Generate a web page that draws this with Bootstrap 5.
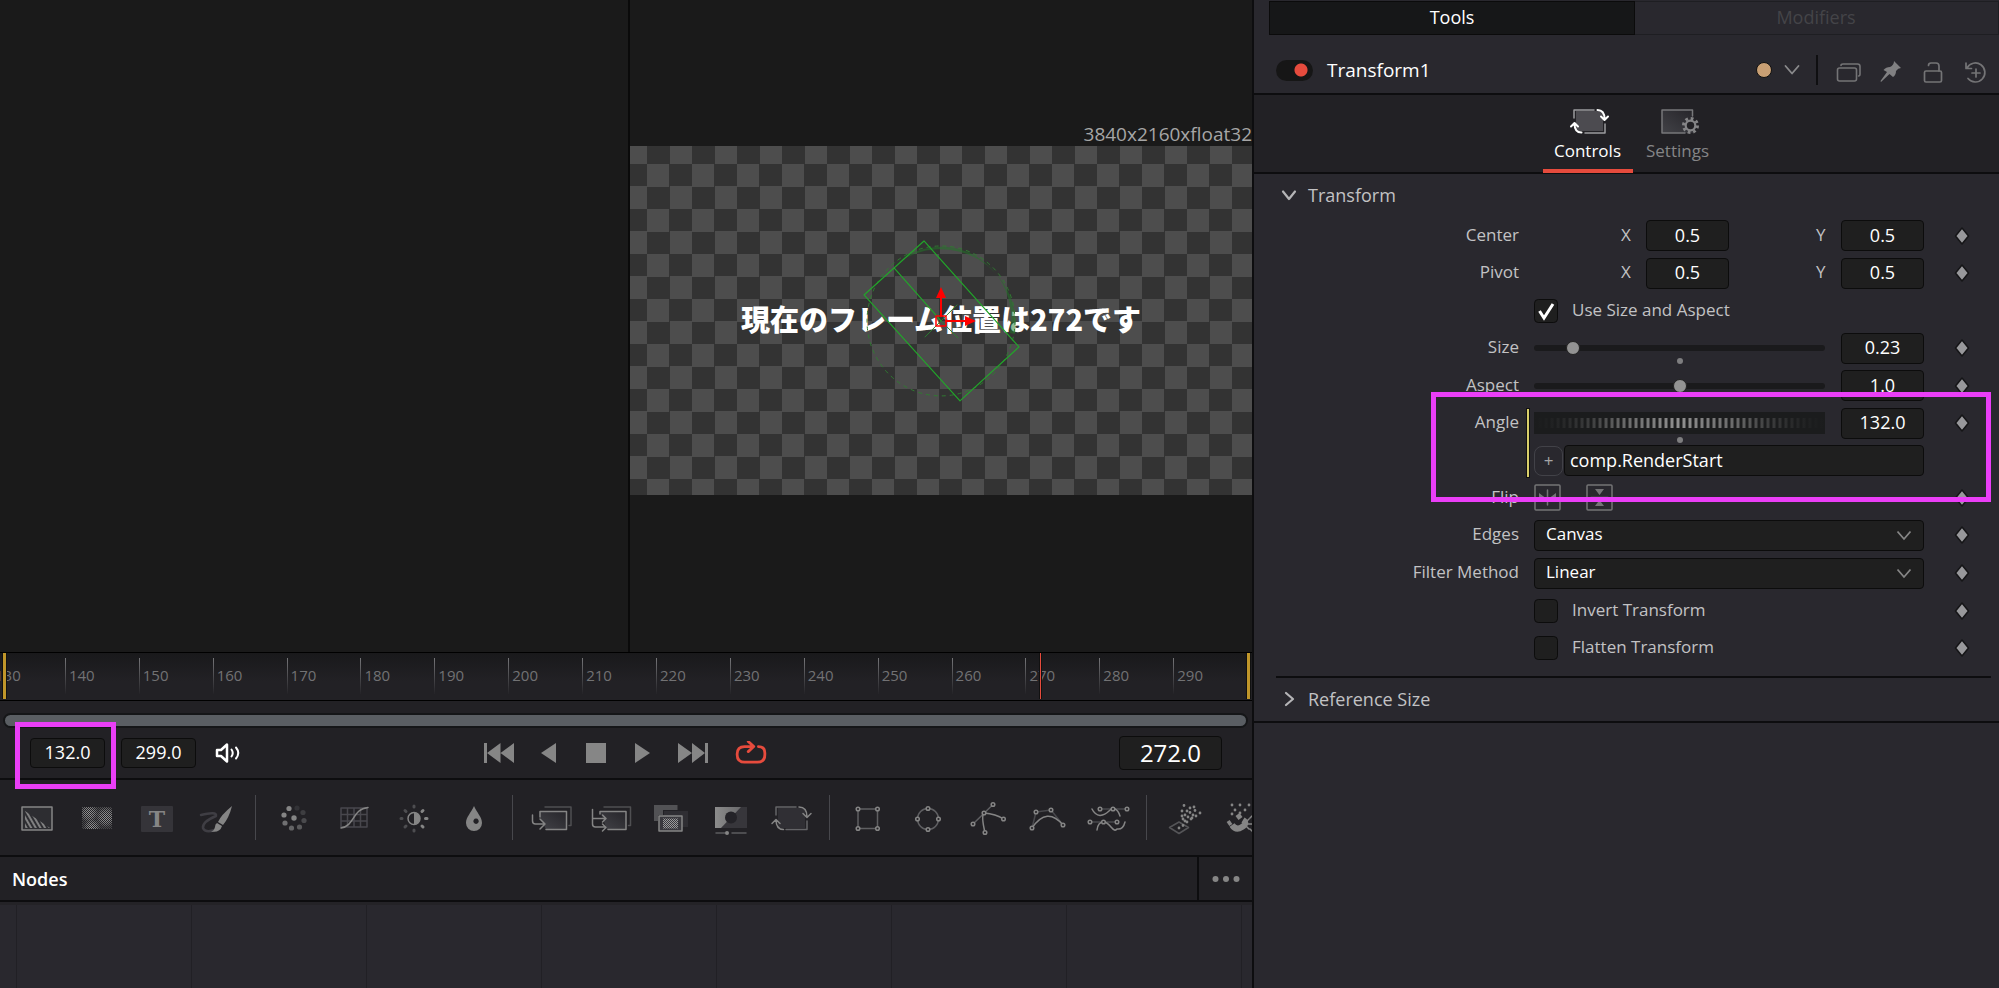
<!DOCTYPE html>
<html lang="en">
<head>
<meta charset="utf-8">
<meta name="viewport" content="width=device-width, initial-scale=1">
<title>Fusion – Transform1</title>
<link href="https://cdn.jsdelivr.net/npm/bootstrap@5.3.0/dist/css/bootstrap.min.css" rel="stylesheet">
<style>
  :root { --line:#0d0d0f; --panel:#29282e; --bar:#222125; --field:#1f1f1f; --label:#c2c2c4; --hot:#e64b3d; --note:#ea3ef7; }
  body { background:var(--panel); color:#fff; font-family:"Open Sans","Noto Sans CJK JP",sans-serif; font-size:17px; line-height:24px; overflow-x:hidden; }
  button { background:none; border:0; padding:0; color:inherit; }
  svg { display:block; fill:none; stroke-linecap:round; stroke-linejoin:round; }
  .solid { fill:#868686; }
  .workspace { display:grid; grid-template-columns:minmax(0,1254fr) minmax(0,745fr); min-height:100vh; }
  .stage { background:var(--bar); border-right:2px solid var(--line); overflow:hidden; }

  /* viewers */
  .viewers { background:#1a1a1a; display:grid; grid-template-columns:minmax(0,628fr) minmax(0,624fr); }
  .viewer-b { border-left:2px solid #0a0a0a; padding-bottom:11px; }
  .frame { aspect-ratio:16/9; width:100%; background:conic-gradient(#333 25%,#4d4d4d 0 50%,#333 0 75%,#4d4d4d 0) 17px 18px/45px 45px; }
  .frame-info { right:0; bottom:100%; color:#a6a6a6; font-size:19px; white-space:nowrap; }
  .frame-title { font:900 29px/32px "Noto Sans CJK JP",sans-serif; white-space:nowrap; padding-bottom:6px; }
  .gizmo { inset:0; width:100%; height:100%; }

  /* timeline */
  .ruler { height:49px; border-top:1px solid #000; border-bottom:1px solid #000; background:linear-gradient(#19191b,#222125 60%); overflow:hidden; }
  .ticks { margin-left:-9px; padding-top:5px; }
  .tick { flex:0 0 5.86%; height:36px; padding-left:3px; color:#727274; font-size:15px; line-height:35px; border-left:1px solid; border-image:linear-gradient(#77777a,#222125) 1; }
  .edge { top:0; width:5px; height:46px; background:#c0962a; border:solid #111; border-width:0 1px; }
  .edge-in { left:2px; } .edge-out { right:1px; }
  .playhead { top:0; left:83%; width:3px; height:46px; background:var(--hot); border:solid #111; border-width:0 1px; }
  .scroller { margin:12px 4px 0 3px; height:15px; background:#5a5e63; border:2px solid #151618; border-radius:8px; }
  .transport { height:52px; border-bottom:2px solid var(--line); padding:0 30px; }
  .transport svg { height:24px; }
  .field { background-color:var(--field); border:1px solid #0c0c0c; border-radius:4px; color:#fff; height:30px; padding:0 0 2px; text-align:center; font-size:18px; box-shadow:none; min-height:0; line-height:24px; }
  .field:focus { background-color:var(--field); color:#fff; border-color:#555; box-shadow:none; }
  .time { width:75px; }
  .time-now { width:103px; height:34px; font-size:24px; }
  .mark-box { border:5px solid var(--note); pointer-events:none; }
  .mark-time { left:15px; top:-6px; width:101px; height:67px; }
  .play-set { gap:26px; left:484px; }

  /* tools */
  .tools { height:77px; border-bottom:2px solid var(--line); padding-left:7px; overflow:hidden; }
  .tools button, .tools svg { flex:none; width:60px; height:44px; }
  .tools svg { stroke:#858585; stroke-width:1.5; }
  .split { flex:none; width:1px; height:45px; margin:0 8px; background:#47474c; }
  .nodes-bar { height:45px; border-bottom:2px solid var(--line); }
  .nodes-bar h2 { font-size:18px; line-height:24px; font-weight:600; padding-left:12px; }
  .more { width:55px; border-left:2px solid var(--line); }
  .node-grid { height:86px; background:repeating-linear-gradient(90deg,transparent 0 174px,#212025 0 175px) -158px 0/calc(100% + 158px) 100%,var(--panel); border-top:3px solid #242327; }

  /* inspector */
  .inspector { background:var(--panel); }
  .mode-tabs { margin:1px 0 0 15px; height:34px; border:1px solid #1e1e22; font-size:18px; }
  .mode-tabs button { flex:1; color:#444448; padding-bottom:2px; }
  .mode-tabs button.active { background:#161718; color:#fff; outline:1px solid #0b0b0b; }
  .tool-head { height:60px; padding:0 11px 8px 22px; border-bottom:2px solid var(--line); font-size:19px; }
  .tool-name { margin-left:14px; }
  .power { width:37px; height:21px; margin:0; border:0; border-radius:11px; background:#161616 radial-gradient(circle at 25px 10px,var(--hot) 6px,transparent 7px); appearance:none; }
  .swatch { width:16px; height:16px; border-radius:50%; background:#c9a074; border:1px solid #111; }
  .head-line { width:2px; height:30px; margin:0 14px 0 16px; background:#0f0f11; }
  .pages { height:79px; border-bottom:2px solid var(--line); background:var(--bar); padding-left:12px; }
  .pages button { width:90px; height:78px; color:#858587; border-bottom:4px solid transparent; padding-top:4px; }
  .pages button.active { color:#fff; border-color:var(--hot); }
  .pages svg { margin-bottom:2px; }
  .section-head { height:43px; padding:0 0 2px 27px; gap:11px; color:var(--label); font-size:18px; }
  .param { display:grid; grid-template-columns:265px minmax(0,1fr) 75px; column-gap:0; height:37px; align-items:center; color:var(--label); }
  .param.tall { height:38px; }
  .param > :first-child { text-align:right; padding-bottom:2px; }
  .param > :nth-child(2) { padding-left:15px; }
  .param .key { justify-self:center; }
  .num { width:83px; height:31px; }
  .axis { width:21px; padding-bottom:2px; }
  .tick-label { padding:0 0 2px 14px; }
  .tick-box { width:24px; height:24px; margin:0; background-color:var(--field); border:1px solid #0c0c0c; border-radius:4px; }
  .tick-box:checked { background-color:var(--field); border-color:#0c0c0c; }
  .tick-box:checked[type=checkbox] { background-image:url("data:image/svg+xml,%3Csvg xmlns='http://www.w3.org/2000/svg' viewBox='0 0 22 22'%3E%3Cpath d='M4.500 11l4.500 7L18 4' fill='none' stroke='%23fff' stroke-width='3'/%3E%3C/svg%3E"); }
  .slide { appearance:none; background:none; width:100%; height:14px; margin:0; display:block; }
  .slide::-webkit-slider-runnable-track { height:6px; border-radius:3px; background:#1a1a1c; border:0; }
  .slide::-webkit-slider-thumb { appearance:none; width:14px; height:14px; margin-top:-4px; border-radius:50%; background:#939393; border:1px solid #222; }
  .home { left:calc(50% - 3px); margin-top:3px; width:6px; height:6px; border-radius:50%; background:#7e7e80; }
  .wheel { appearance:none; display:block; width:100%; height:22px; margin:0; background:linear-gradient(90deg,#1b1c1d,transparent 60%) 0 0/50% 100% no-repeat,linear-gradient(270deg,#1b1c1d,transparent 60%) 100% 0/50% 100% no-repeat,linear-gradient(90deg,#1b1c1de0,#1b1c1d00 50%,#1b1c1de0),linear-gradient(90deg,#909090 50%,#1b1c1d 0) center/6px 10px repeat-x,#1b1c1d; }
  .wheel::-webkit-slider-thumb { appearance:none; width:14px; height:22px; }
  .expr-line { left:273px; top:5px; bottom:2px; width:2px; background:#d9cf6a; outline:1px solid #111; }
  .add { width:29px; height:30px; border:1px solid #424248; border-radius:8px; color:#a5a5a7; flex:none; margin-right:1px; }
  .expr { text-align:left; padding-left:5px; height:31px; }
  .pick { text-align:left; padding:0 34px 2px 11px; height:31px; font-size:17px; background-image:url("data:image/svg+xml,%3Csvg xmlns='http://www.w3.org/2000/svg' viewBox='0 0 16 16'%3E%3Cpath d='M1.500 4.500L8 12l6.500-7.500' fill='none' stroke='%23858585' stroke-width='1.800'/%3E%3C/svg%3E"); background-repeat:no-repeat; background-size:16px 16px; background-position:right 11px center; }
  .mark-angle { left:177px; right:8px; top:-12px; bottom:-23px; }
  .fold { margin:9px 8px 0 22px; border-top:2px solid var(--line); }
  .fold-end { border-top:2px solid var(--line); }
</style>
</head>
<body>
<svg width="0" height="0" class="position-absolute" aria-hidden="true">
  <defs>
    <pattern id="hatch" width="4" height="4" patternUnits="userSpaceOnUse" patternTransform="rotate(-30)"><path d="M1 0v4" stroke="#8a8a8a" stroke-width="1.800"/></pattern>
    <pattern id="dots" width="2" height="2" patternUnits="userSpaceOnUse"><path d="M0 0h1v1h-1zM1 1h1v1h-1z" fill="#9a9a9a" stroke="none"/></pattern>
    <radialGradient id="blob"><stop offset="0" stop-color="#fff"/><stop offset=".6" stop-color="#fff" stop-opacity=".7"/><stop offset="1" stop-color="#fff" stop-opacity=".1"/></radialGradient>
    <mask id="blobs"><g stroke="none"><rect x="15" y="11" width="30" height="23" fill="#555"/><circle cx="22" cy="17" r="9" fill="url(#blob)"/><circle cx="39" cy="21" r="10" fill="url(#blob)"/><circle cx="25" cy="31" r="8" fill="url(#blob)"/></g></mask>
    <linearGradient id="fade" x1="0" y1="1" x2="1" y2="0"><stop offset="0" stop-color="#424247"/><stop offset="1" stop-color="#26252a"/></linearGradient>
    <linearGradient id="lit"><stop offset="0" stop-color="#8c8c8c"/><stop offset="1" stop-color="#6a6a6c"/></linearGradient>
    <symbol id="key" viewBox="0 0 16 18"><path d="M8 1L14.500 9 8 17 1.500 9z" fill="#98989b" stroke="#151517" stroke-width="1.500"/></symbol>
  </defs>
</svg>

<main class="workspace">
  <section class="stage d-flex flex-column">
    <div class="viewers flex-grow-1">
      <div></div>
      <div class="viewer-b d-flex align-items-center overflow-hidden">
        <div class="frame position-relative d-flex align-items-center justify-content-center">
          <div class="frame-info position-absolute">3840x2160xfloat32</div>
          <div class="frame-title">現在のフレーム位置は272です</div>
          <svg class="gizmo position-absolute" viewBox="0 0 622 350">
            <path d="M266 118A75 75 0 0 1 385 188L380 187A70 72 0 0 0 266 118z" fill="#1f7a26" fill-opacity=".5"/>
            <ellipse cx="311" cy="175" rx="74" ry="75" stroke="#2f7a30" stroke-dasharray="4 4" stroke-linecap="butt"/>
            <path d="M294 95L389 201 330 255 234 149zM264 122L311 175" stroke="#22a52a" stroke-width="1.200"/>
            <path d="M295 191L327 159M311 175L328 192" stroke="#2c7d30"/>
            <g stroke="#f00" stroke-width="2"><path d="M311 170V150M316 175H336"/><path d="M306 170h10v10h-10z" stroke-width="1.500"/></g>
            <path d="M311 141L316 152H306zM346 175L335 170V180z" fill="#f00"/>
          </svg>
        </div>
      </div>
    </div>

    <div class="ruler position-relative">
      <div class="ticks d-flex">
        <div class="tick">130</div><div class="tick">140</div><div class="tick">150</div><div class="tick">160</div><div class="tick">170</div><div class="tick">180</div><div class="tick">190</div><div class="tick">200</div><div class="tick">210</div><div class="tick">220</div><div class="tick">230</div><div class="tick">240</div><div class="tick">250</div><div class="tick">260</div><div class="tick">270</div><div class="tick">280</div><div class="tick">290</div>
      </div>
      <span class="edge edge-in position-absolute"></span>
      <span class="playhead position-absolute"></span>
      <span class="edge edge-out position-absolute"></span>
    </div>
    <div class="scroller"></div>

    <div class="transport position-relative d-flex align-items-center">
      <input class="field time me-3" aria-label="Render start" value="132.0">
      <input class="field time" aria-label="Render end" value="299.0">
      <button class="ms-3" aria-label="Audio"><svg width="32" height="24" viewBox="0 0 32 24" stroke="#fff" stroke-width="2.500"><path d="M5 9h4l6-5.500v17L9 15H5z"/><path d="M19.500 8.500q2.500 3.500 0 7M24 6.500q4.500 5.500 0 11" stroke-width="2"/></svg></button>
      <div class="play-set position-absolute d-flex">
        <button aria-label="First frame"><svg class="solid" width="30" viewBox="0 0 30 24"><path d="M0 2h3v20H0zM16.500 2v20L3 12zM30 2v20L16.500 12z"/></svg></button>
        <button aria-label="Play reverse"><svg class="solid" width="18" viewBox="0 0 18 24"><path d="M16 2v20L1 12z"/></svg></button>
        <button aria-label="Stop"><svg class="solid" width="24" viewBox="0 0 24 24"><path d="M2 2h20v20H2z"/></svg></button>
        <button aria-label="Play"><svg class="solid" width="18" viewBox="0 0 18 24"><path d="M1 2v20L16 12z"/></svg></button>
        <button aria-label="Last frame"><svg class="solid" width="30" viewBox="0 0 30 24"><path d="M27 2h3v20h-3zM0 2v20L14 12zM14 2v20L27 12z"/></svg></button>
        <button aria-label="Loop"><svg width="34" viewBox="0 0 34 26" stroke="#e64b3d" stroke-width="3"><path d="M25 6q7 0 7 7v2q0 8-8 8H10q-8 0-8-8v-1q0-8 8-8H20M14 0.500L20 6 14 11.500"/></svg></button>
      </div>
      <input class="field time-now ms-auto" aria-label="Current frame" value="272.0">
      <span class="mark-box mark-time position-absolute"></span>
    </div>

    <div class="tools d-flex align-items-center">
      <button aria-label="Background"><svg viewBox="0 0 60 44"><rect x="15" y="11" width="30" height="23" fill="#2d2d31"/><path d="M18 15L43 32H18z" fill="url(#hatch)" stroke="none"/></svg></button>
      <button aria-label="Fast Noise"><svg viewBox="0 0 60 44"><rect x="15" y="11" width="30" height="22" fill="url(#dots)" mask="url(#blobs)" stroke="none"/></svg></button>
      <button aria-label="Text"><svg viewBox="0 0 60 44"><rect x="14" y="10" width="32" height="26" rx="1" fill="#353439" stroke="none"/><text x="30" y="31" text-anchor="middle" font-family="DejaVu Serif, serif" font-weight="700" font-size="22" fill="#858585" stroke="none">T</text></svg></button>
      <button aria-label="Paint"><svg viewBox="0 0 60 44"><path d="M14 19Q30 15 29 20 15 26 16 32 18 37 28 34" stroke="#3f3e44" stroke-width="2.500"/><path d="M45 10Q34 19 31 26L36 29Q42 22 45 10zM30 27Q28 28 28 31 27 35 24 35.500 33 37 35 30z" fill="#858585" stroke="none"/></svg></button>
      <span class="split"></span>
      <button aria-label="Color Corrector"><svg viewBox="0 0 60 44"><g fill="#858585" stroke="none"><circle cx="30" cy="22" r="2.700"/><circle cx="25" cy="12.500" r="2.600"/><circle cx="20" cy="19" r="2.600"/><circle cx="21" cy="27" r="2.600" fill="#707072"/><circle cx="27.500" cy="32" r="2.600" fill="#646466"/><circle cx="35.500" cy="31" r="2.600" fill="#5a5a5c"/><circle cx="40" cy="24.500" r="2.600" fill="#4a4a4d"/><circle cx="39" cy="16.500" r="2.600" fill="#3d3d40"/><circle cx="33" cy="12" r="2.600" fill="#323236"/></g></svg></button>
      <button aria-label="Color Curves"><svg viewBox="0 0 60 44"><path d="M17 12h26v19H17zM17 18.500h26M17 25h26M23.500 12v19M30 12v19M36.500 12v19" stroke="#48474d"/><path d="M17 32C31 30 28 13 44 11.500"/></svg></button>
      <button aria-label="Brightness"><svg viewBox="0 0 60 44"><circle cx="30" cy="22.500" r="6"/><path d="M30 16.500a6 6 0 0 1 0 12z" fill="#858585" stroke="none"/><path d="M38 15.500l1-1M43 22.500h-1.500M38 30l1 1" stroke-width="3"/><path d="M30 11v-1M30 34v1M22 30l-1 1M22 15.500l-1-1M18 22.500h-1" stroke="#4d4d50" stroke-width="3"/></svg></button>
      <button aria-label="Blur"><svg viewBox="0 0 60 44"><path d="M30 10C33 17 38 21 38 27a8 8 0 0 1-16 0C22 21 27 17 30 10zM32 22.500a2.700 2.700 0 1 0 .1 0z" fill="#858585" fill-rule="evenodd" stroke="none"/></svg></button>
      <span class="split"></span>
      <button aria-label="Merge"><svg viewBox="0 0 60 44"><path d="M24 11H50V29.500H48" stroke="#4f4f52"/><path d="M19 15.500H45.500V33.500H25L19 21z" fill="url(#fade)" stroke="none"/><path d="M19 21V15.500H45.500V33.500H25"/><path d="M11.500 19v6q0 3 3 3H23.500M19 23l5 5-5 5"/></svg></button>
      <button aria-label="Channel Booleans"><svg viewBox="0 0 60 44"><path d="M23 11H49.500V29.500H47.500" stroke="#4f4f52"/><path d="M19 15.500H45V33.500H26z" fill="url(#fade)" stroke="none"/><path d="M19 18V15.500H45V33.500H27"/><path d="M11.500 13.500V28q0 3 3 3H24M11.500 22.500H24M21.500 19l3.500 3.500-3.500 3.500M21.500 28l3.500 3.500-3.500 3.500"/></svg></button>
      <button aria-label="Matte Control"><svg viewBox="0 0 60 44"><path d="M23 15H47V31H23z" fill="#2f2e33" stroke="none"/><path d="M13 9H36.500V14H22V19H17V25H13z" fill="#525255" stroke="none"/><rect x="18" y="20" width="23" height="15" fill="#3a393e"/><path d="M22 22.500h15v10H22z" fill="url(#dots)" stroke="none"/></svg></button>
      <button aria-label="Luma Keyer"><svg viewBox="0 0 60 44"><rect x="14" y="11" width="32" height="21" fill="#37363b" stroke="none"/><path d="M14 11H40L20 32H14z" fill="url(#lit)" stroke="none"/><circle cx="30" cy="21.500" r="6" fill="#242328" stroke="none"/><path d="M15 37H24M31 37H45" stroke="#5c5c5f"/><circle cx="26" cy="37" r="2" fill="#858585" stroke="none"/></svg></button>
      <button aria-label="Transform"><svg viewBox="0 0 60 44"><rect x="17" y="12" width="27" height="20" fill="#302f34" stroke="none"/><path d="M15 19V11H35M46 25V33.500H25" stroke="#646467"/><path d="M38 11q8 0 8 10M42 17.500l4 4 4-4M22.500 33.500q-7.500 0-7.500-10M11 27.500l4-4 4 4"/></svg></button>
      <span class="split"></span>
      <button aria-label="Rectangle Mask"><svg viewBox="0 0 60 44"><path d="M20 13h19.500v19.500H20z" stroke="#5f5f62"/><g fill="#222125"><circle cx="20" cy="13" r="1.800"/><circle cx="39.500" cy="13" r="1.800"/><circle cx="20" cy="32.500" r="1.800"/><circle cx="39.500" cy="32.500" r="1.800"/></g></svg></button>
      <button aria-label="Ellipse Mask"><svg viewBox="0 0 60 44"><circle cx="30" cy="23" r="10.500" stroke="#5f5f62"/><g fill="#222125"><circle cx="30" cy="12.500" r="1.800"/><circle cx="40.500" cy="23" r="1.800"/><circle cx="30" cy="33.500" r="1.800"/><circle cx="19.500" cy="23" r="1.800"/></g></svg></button>
      <button aria-label="Polygon Mask"><svg viewBox="0 0 60 44"><path d="M35 8.500L15 28" stroke="#5f5f62"/><path d="M45.500 23Q38 18 26 17 23 20 27 36.500"/><g fill="#222125"><circle cx="35" cy="8.500" r="1.800"/><circle cx="26" cy="17" r="1.800"/><circle cx="15" cy="28" r="1.800"/><circle cx="45.500" cy="23" r="1.800"/><circle cx="27" cy="36.500" r="1.800"/></g></svg></button>
      <button aria-label="B-Spline Mask"><svg viewBox="0 0 60 44"><path d="M14 32L18 16 33 14 45 29" stroke="#48484c"/><path d="M14 32Q29 10 45 29"/><g fill="#222125"><circle cx="18" cy="16" r="1.800"/><circle cx="33" cy="14" r="1.800"/><circle cx="14" cy="32" r="1.800"/><circle cx="45" cy="29" r="1.800"/></g></svg></button>
      <button aria-label="Multi Polygon"><svg viewBox="0 0 60 44"><path d="M22 13H49M12 26H39" stroke="#48484c"/><path d="M14 13Q17 19 22 19.500 27 19 31 15T37 13Q40 14 42 20M19 34Q20 26 25.500 26 29 26 33 31T39 33Q45 34 47 26"/><g fill="#222125"><circle cx="22" cy="13" r="1.800"/><circle cx="35" cy="13" r="1.800"/><circle cx="49" cy="13" r="1.800"/><circle cx="12" cy="26" r="1.800"/><circle cx="25.500" cy="26" r="1.800"/><circle cx="39" cy="26" r="1.800"/></g></svg></button>
      <span class="split"></span>
      <button aria-label="Particle Emitter"><svg viewBox="0 0 60 44"><path d="M14.500 31.500L24 26 33.500 31.500 24 37.500z" stroke="#555558"/><path d="M24 32h0M28 29.500h0M32 26h0M28 23h0M27 15h0M32 15h0M35 12h0M39 11h0M30 19h0M35 16.500h0M40 14.500h0M33 21h0M38 19h0M45 17h0M36 23h0M41 20h0M30 25h0M27 20h0M29 9.500h0M37 22h0" stroke-width="2.800"/></svg></button>
      <button aria-label="Particle Render"><svg viewBox="0 0 60 44"><path d="M17 9h0M25 9h0M34 9h0M20 14h0M30 14h0M39 14h0M17 18h0M25 17h0" stroke-width="2.800"/><path d="M17 29Q21 35 27 31T28 24" stroke-width="6" stroke-linecap="butt"/><path d="M22.500 18.500l3 4M13 28l3-2" stroke-width="5" stroke-linecap="butt"/><path d="M29 28H46M34 23l-5 5 5 5M39 19V37M35 22l4-4 4 4M35 33l4 4 4-4"/></svg></button>
    </div>

    <div class="nodes-bar d-flex align-items-center">
      <h2 class="m-0 flex-grow-1">Nodes</h2>
      <button class="more align-self-stretch d-flex align-items-center justify-content-center" aria-label="Nodes menu"><svg class="solid" width="30" height="8" viewBox="0 0 30 8"><circle cx="4.500" cy="4" r="3"/><circle cx="15" cy="4" r="3"/><circle cx="25.500" cy="4" r="3"/></svg></button>
    </div>
    <div class="node-grid"></div>
  </section>

  <aside class="inspector">
    <div class="mode-tabs d-flex"><button class="active">Tools</button><button>Modifiers</button></div>
    <div class="tool-head d-flex align-items-end">
      <div class="d-flex align-items-center w-100">
        <input class="power" type="checkbox" id="power" checked>
        <label for="power" class="tool-name me-auto">Transform1</label>
        <button class="d-flex align-items-center gap-2" aria-label="Tile colour"><span class="swatch"></span><svg class="ms-1" width="16" height="12" viewBox="0 0 16 12" stroke="#8a8a8c" stroke-width="1.800"><path d="M1.500 2L8 9.500 14.500 2"/></svg></button>
        <span class="head-line"></span>
        <div class="d-flex align-items-center gap-3 ms-1 pt-1">
          <button aria-label="Versions"><svg width="26" height="24" viewBox="0 0 26 24" stroke="#747476" stroke-width="1.600"><rect x="1.500" y="8" width="19" height="13" rx="2"/><path d="M5 5.500q0-1.500 2-1.500H21.500q2.500 0 2.500 2.500V14q0 2-1.500 2"/></svg></button>
          <button aria-label="Pin"><svg width="26" height="24" viewBox="0 0 26 24"><path d="M16 1L23 8Q20 8 18 11 18 15 15 17L11.500 14 3 22 2.500 21 9 12 5.500 10Q8 7 12 7 16 5 16 1z" fill="#808082"/></svg></button>
          <button aria-label="Lock"><svg width="26" height="24" viewBox="0 0 26 24" stroke="#747476" stroke-width="1.700"><rect x="4.500" y="11" width="17" height="11" rx="1.500"/><path d="M8.500 5.500Q8.500 3 11 3h5q3 0 3 3V11"/></svg></button>
          <button aria-label="Reset"><svg width="26" height="24" viewBox="0 0 26 24" stroke="#747476" stroke-width="1.700"><path d="M5 8A9.500 9.500 0 1 1 6 18.500M4 3V8.500H9.500M14 9v8M10 13h8"/></svg></button>
        </div>
      </div>
    </div>
    <div class="pages d-flex justify-content-center">
      <button class="active"><svg class="mx-auto" width="44" height="32" viewBox="0 0 44 32" stroke="#fff" stroke-width="2"><path d="M10 6H37V26H10z" fill="#4c4b50" stroke="none"/><path d="M8 13V5H28M39 19V28H19" stroke="#9c9c9e" stroke-width="1.500"/><path d="M31.500 5q7 0 7 9M35 11.500l3.500 3.500 3.500-3.500M15.500 27.500q-7 0-7-9M5 21.500L8.500 18l3.500 3.500"/></svg>Controls</button>
      <button><svg class="mx-auto" width="44" height="32" viewBox="0 0 44 32" stroke="#858587" stroke-width="1.500"><path d="M6 5H37V28H6z" fill="url(#fade)" stroke="none"/><path d="M36.500 11V5H6V28H29" stroke="#77777a"/><circle cx="34.500" cy="20.500" r="7" fill="none" stroke-width="3" stroke-dasharray="2.750 2.750" stroke-linecap="butt"/><circle cx="34.500" cy="20.500" r="4.800" fill="#222125" stroke-width="2.200"/></svg>Settings</button>
    </div>

    <button class="section-head d-flex align-items-center w-100"><svg width="16" height="16" viewBox="0 0 16 16" stroke="#b5b5b7" stroke-width="2.200"><path d="M2 4.500L8 12 14 4.500"/></svg>Transform</button>

    <div class="param"><span>Center</span>
      <div class="d-flex align-items-center justify-content-end"><label for="cx" class="axis ms-auto">X</label><input id="cx" class="field num me-auto ms-1" value="0.5"><label for="cy" class="axis">Y</label><input id="cy" class="field num ms-1" value="0.5"></div>
      <svg class="key" width="16" height="18"><use href="#key"/></svg></div>
    <div class="param tall"><span>Pivot</span>
      <div class="d-flex align-items-center justify-content-end"><label for="px" class="axis ms-auto">X</label><input id="px" class="field num me-auto ms-1" value="0.5"><label for="py" class="axis">Y</label><input id="py" class="field num ms-1" value="0.5"></div>
      <svg class="key" width="16" height="18"><use href="#key"/></svg></div>
    <div class="param"><span></span>
      <div class="d-flex align-items-center"><input id="usa" type="checkbox" class="form-check-input tick-box" checked><label for="usa" class="tick-label">Use Size and Aspect</label></div></div>
    <div class="param tall"><label for="size">Size</label>
      <div class="d-flex align-items-center gap-3"><div class="position-relative flex-grow-1"><input id="size" class="slide" type="range" min="0" max="2" step="0.01" value="0.23"><span class="home position-absolute top-100"></span></div><input class="field num" aria-label="Size value" value="0.23"></div>
      <svg class="key" width="16" height="18"><use href="#key"/></svg></div>
    <div class="param"><label for="aspect">Aspect</label>
      <div class="d-flex align-items-center gap-3"><div class="flex-grow-1"><input id="aspect" class="slide" type="range" min="0" max="2" step="0.01" value="1"></div><input class="field num" aria-label="Aspect value" value="1.0"></div>
      <svg class="key" width="16" height="18"><use href="#key"/></svg></div>
    <div class="position-relative">
      <div class="param tall"><label for="angle">Angle</label>
        <div class="d-flex align-items-center gap-3"><div class="position-relative flex-grow-1"><input id="angle" class="wheel" type="range" min="0" max="360" value="132"><span class="home position-absolute top-100"></span></div><input class="field num" aria-label="Angle value" value="132.0"></div>
        <svg class="key" width="16" height="18"><use href="#key"/></svg></div>
      <div class="param"><span></span>
        <div class="d-flex align-items-center"><button class="add" aria-label="Pick whip">+</button><input class="field expr flex-grow-1" aria-label="Expression" value="comp.RenderStart"></div></div>
      <span class="expr-line position-absolute"></span>
      <span class="mark-box mark-angle position-absolute z-1"></span>
    </div>
    <div class="param"><span>Flip</span>
      <div class="d-flex align-items-center gap-4">
        <button aria-label="Flip horizontally"><svg width="28" height="28" viewBox="0 0 28 28"><rect x="1" y="1" width="25" height="25" rx="1" stroke="#747476" stroke-width="1.500"/><path d="M13.500 6v15" stroke="#747476" stroke-width="1.500"/><path d="M5 9v9l6-4.500zM22 9v9l-6-4.500z" fill="#747476"/></svg></button>
        <button aria-label="Flip vertically"><svg width="28" height="28" viewBox="0 0 28 28"><rect x="1" y="1" width="25" height="25" rx="1" stroke="#747476" stroke-width="1.500"/><path d="M5 13.500h17" stroke="#747476" stroke-width="1.500"/><path d="M9 5h9l-4.500 6zM9 22h9l-4.500-6z" fill="#747476"/></svg></button>
      </div>
      <svg class="key" width="16" height="18"><use href="#key"/></svg></div>
    <div class="param tall"><label for="edges">Edges</label>
      <div><select id="edges" class="form-select field pick w-100"><option>Canvas</option><option>Wrap</option><option>Duplicate</option><option>Mirror</option></select></div>
      <svg class="key" width="16" height="18"><use href="#key"/></svg></div>
    <div class="param tall"><label for="filter">Filter Method</label>
      <div><select id="filter" class="form-select field pick w-100"><option>Linear</option><option>Nearest Neighbor</option><option>Box</option></select></div>
      <svg class="key" width="16" height="18"><use href="#key"/></svg></div>
    <div class="param"><span></span>
      <div class="d-flex align-items-center"><input id="inv" type="checkbox" class="form-check-input tick-box"><label for="inv" class="tick-label">Invert Transform</label></div>
      <svg class="key" width="16" height="18"><use href="#key"/></svg></div>
    <div class="param tall"><span></span>
      <div class="d-flex align-items-center"><input id="flat" type="checkbox" class="form-check-input tick-box"><label for="flat" class="tick-label">Flatten Transform</label></div>
      <svg class="key" width="16" height="18"><use href="#key"/></svg></div>
    <div class="fold"></div>
    <button class="section-head d-flex align-items-center w-100"><svg width="16" height="16" viewBox="0 0 16 16" stroke="#b5b5b7" stroke-width="2.200"><path d="M5 2L12 8 5 14"/></svg>Reference Size</button>
    <div class="fold-end"></div>
  </aside>
</main>
<script src="https://cdn.jsdelivr.net/npm/bootstrap@5.3.0/dist/js/bootstrap.bundle.min.js"></script>
</body>
</html>
